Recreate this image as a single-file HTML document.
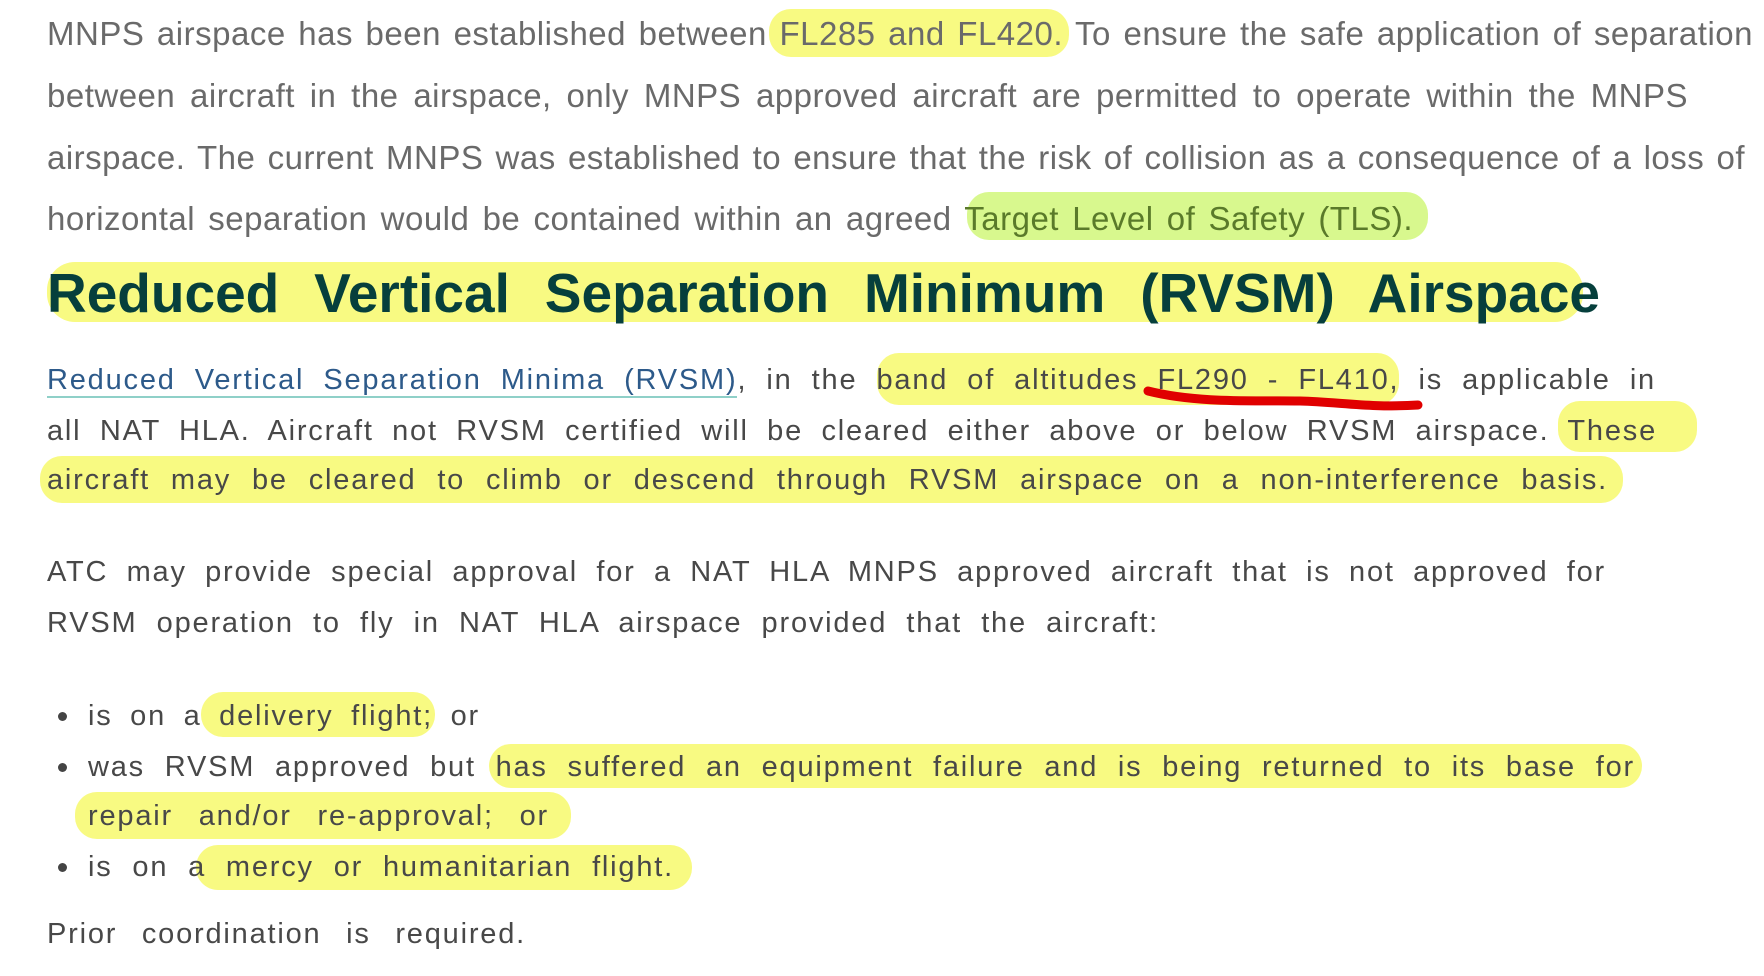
<!DOCTYPE html>
<html><head><meta charset="utf-8"><style>
body{margin:0;width:1764px;height:976px;background:#fff;position:relative;overflow:hidden;font-family:"Liberation Sans",sans-serif}
.h{position:absolute;background:#f8fa82;border-radius:22px}
.g{background:#d8f88e}
.l{position:absolute;white-space:nowrap;text-align:justify;text-align-last:justify;line-height:1}
.p1{font-size:33px;color:#6a6a6a;letter-spacing:0.5px}
.p2{font-size:29px;color:#484848;letter-spacing:1.8px}
.hd{font-size:55px;font-weight:bold;color:#063f3c;letter-spacing:0px}
a{color:#2d5a8a;text-decoration:none}
.dot{position:absolute;width:9px;height:9px;border-radius:50%;background:#444}
</style></head><body>
<div class="h" style="left:769px;top:9px;width:300px;height:48px"></div>
<div class="h g" style="left:967px;top:192px;width:461px;height:48px"></div>
<div class="h" style="left:47px;top:262px;width:1536px;height:60px;border-radius:28px"></div>
<div class="h" style="left:877px;top:353px;width:522px;height:52px"></div>
<div class="h" style="left:1558px;top:401px;width:139px;height:51px"></div>
<div class="h" style="left:40px;top:456px;width:1583px;height:47px"></div>
<div class="h" style="left:201px;top:692px;width:234px;height:45px"></div>
<div class="h" style="left:489px;top:744px;width:1153px;height:44px"></div>
<div class="h" style="left:75px;top:792px;width:496px;height:47px"></div>
<div class="h" style="left:196px;top:845px;width:496px;height:45px"></div>

<div class="l p1" style="left:47px;top:17px;width:1706px">MNPS airspace has been established between FL285 and FL420. To ensure the safe application of separation</div>
<div class="l p1" style="left:47px;top:79px;width:1641px">between aircraft in the airspace, only MNPS approved aircraft are permitted to operate within the MNPS</div>
<div class="l p1" style="left:47px;top:141px;width:1698px">airspace. The current MNPS was established to ensure that the risk of collision as a consequence of a loss of</div>
<div class="l p1" style="left:47px;top:202px;width:1366px">horizontal separation would be contained within an agreed <span style="color:#5a7a2a">Target Level of Safety (TLS).</span></div>
<div class="l hd" style="left:47px;top:266px;width:1553px">Reduced Vertical Separation Minimum (RVSM) Airspace</div>

<div class="l p2" style="left:47px;top:366px;width:1609px"><a style="border-bottom:2px solid #8fd0c8">Reduced Vertical Separation Minima (RVSM)</a>, in the band of altitudes FL290 - FL410, is applicable in</div>
<div class="l p2" style="left:47px;top:417px;width:1610px">all NAT HLA. Aircraft not RVSM certified will be cleared either above or below RVSM airspace. These</div>
<div class="l p2" style="left:47px;top:466px;width:1561px">aircraft may be cleared to climb or descend through RVSM airspace on a non-interference basis.</div>
<svg style="position:absolute;left:0;top:0" width="1764" height="976"><path d="M1148 391 C1200 404 1260 400 1300 401 C1340 402 1370 408 1418 405" stroke="#e00000" stroke-width="9" fill="none" stroke-linecap="round"/></svg>

<div class="l p2" style="left:47px;top:558px;width:1559px">ATC may provide special approval for a NAT HLA MNPS approved aircraft that is not approved for</div>
<div class="l p2" style="left:47px;top:609px;width:1112px">RVSM operation to fly in NAT HLA airspace provided that the aircraft:</div>

<div class="dot" style="left:58px;top:712px"></div>
<div class="dot" style="left:58px;top:763px"></div>
<div class="dot" style="left:58px;top:863px"></div>
<div class="l p2" style="left:88px;top:702px;width:392px">is on a delivery flight; or</div>
<div class="l p2" style="left:88px;top:753px;width:1547px">was RVSM approved but has suffered an equipment failure and is being returned to its base for</div>
<div class="l p2" style="left:88px;top:802px;width:461px">repair and/or re-approval; or</div>
<div class="l p2" style="left:88px;top:853px;width:586px">is on a mercy or humanitarian flight.</div>
<div class="l p2" style="left:47px;top:920px;width:479px">Prior coordination is required.</div>
</body></html>
